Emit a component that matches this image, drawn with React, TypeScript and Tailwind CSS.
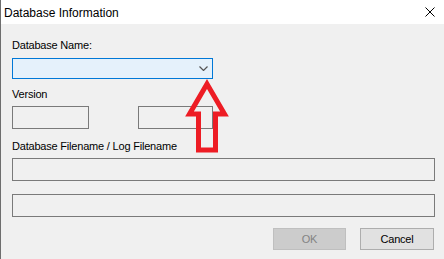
export default function App() {
  return (
    <div
      className="relative w-[444px] h-[259px] bg-[#f0f0f0] border-l border-[#6e6e6e] text-[11px] tracking-[-0.2px] text-black overflow-hidden"
      style={{ fontFamily: '"Liberation Sans", Arial, sans-serif' }}
    >
      {/* title bar */}
      <div className="h-[24px] bg-white flex items-center justify-between pl-[3px] pr-[9px]">
        <span className="text-[12px] tracking-normal leading-[24px] pt-[1px]">Database Information</span>
        <svg width="10" height="10" viewBox="0 0 10 10">
          <path d="M0.5 0.5 L9.5 9.5 M9.5 0.5 L0.5 9.5" stroke="#000" strokeWidth="1" />
        </svg>
      </div>

      {/* body */}
      <div className="pl-[11px] pr-[9px] pt-[14px]">
        <div className="leading-[15px]">Database Name:</div>
        <div className="mt-[5px] w-[201px] h-[21px] border border-[#0078d7] bg-[#e5f1fb] flex items-center justify-end pr-[4px]">
          <svg width="9" height="5" viewBox="0 0 9 5">
            <path d="M0.5 0.5 L4.5 4.5 L8.5 0.5" fill="none" stroke="#555" strokeWidth="1.2" />
          </svg>
        </div>

        <div className="mt-[8px] leading-[15px]">Version</div>
        <div className="mt-[4px] flex gap-[49px]">
          <div className="w-[77px] h-[23px] border border-[#7a7a7a]" />
          <div className="w-[75px] h-[23px] border border-[#7a7a7a]" />
        </div>

        <div className="mt-[10px] leading-[15px]">Database Filename / Log Filename</div>
        <div className="mt-[4px] h-[23px] border border-[#7a7a7a]" />
        <div className="mt-[13px] h-[23px] border border-[#7a7a7a]" />

        <div className="mt-[11px] flex justify-end gap-[14px] pr-[1px]">
          <div className="w-[73px] h-[22px] border border-[#bfbfbf] bg-[#cccccc] text-[#838383] flex items-center justify-center">
            OK
          </div>
          <div className="w-[74px] h-[22px] border border-[#adadad] bg-[#e1e1e1] flex items-center justify-center">
            Cancel
          </div>
        </div>
      </div>

      {/* red annotation arrow */}
      <svg className="absolute left-0 top-0" width="444" height="259" viewBox="0 0 444 259">
        <polygon
          points="206,84 223.5,114 214.5,114 214.5,150 197.5,150 197.5,114 188.5,114"
          fill="none"
          stroke="#ed1c24"
          strokeWidth="5"
        />
      </svg>
    </div>
  );
}
